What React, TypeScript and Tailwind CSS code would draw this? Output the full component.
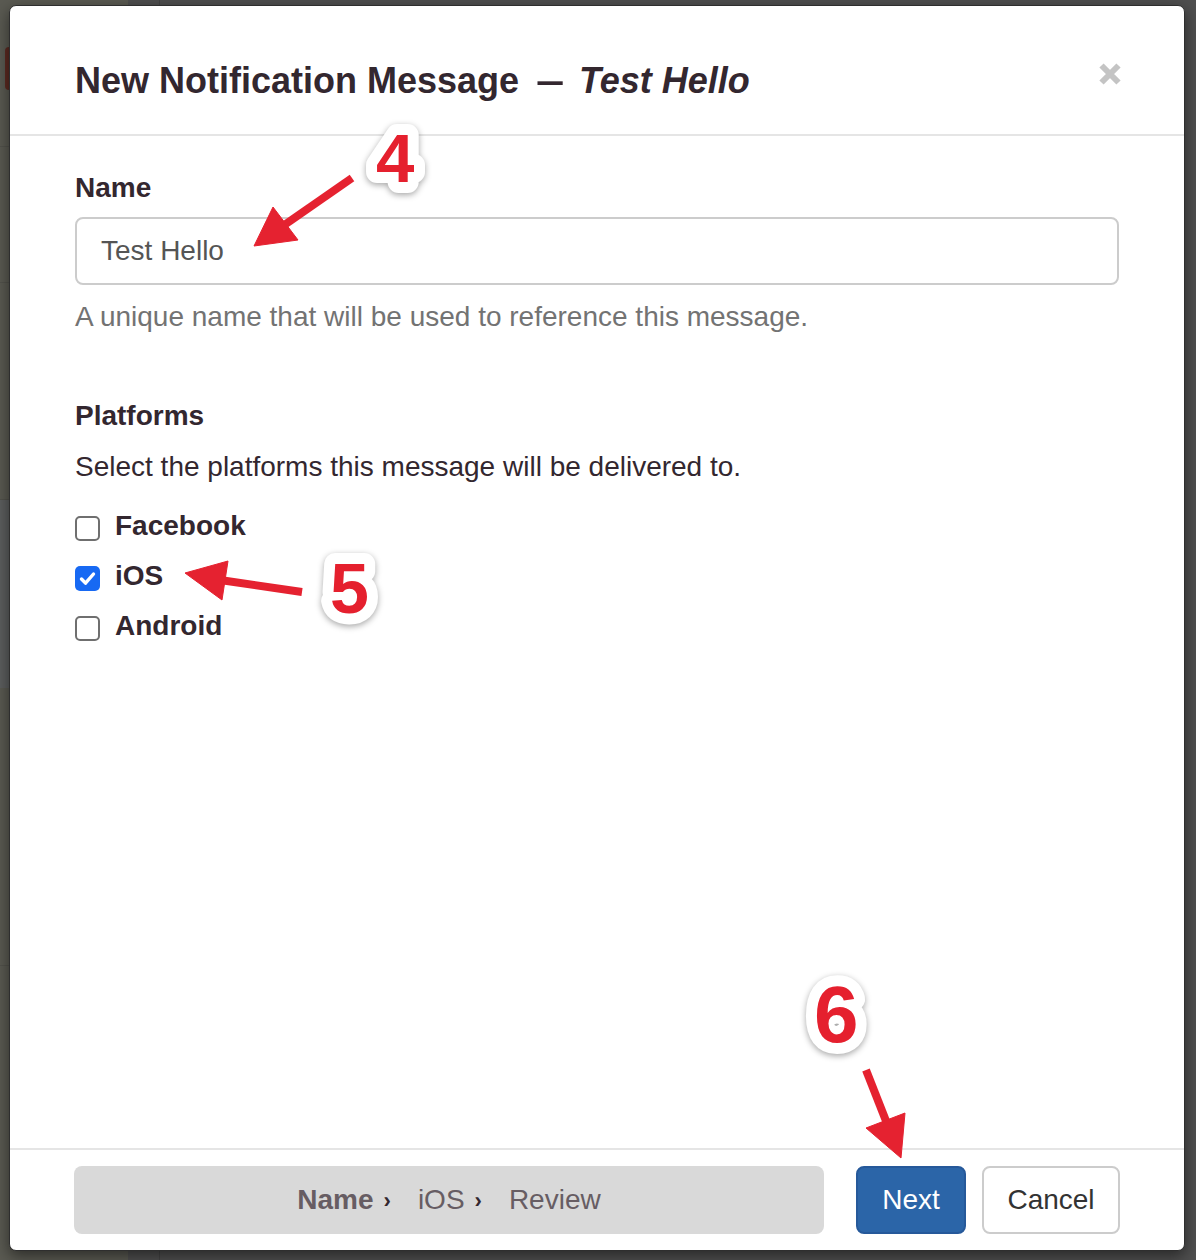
const font = "font-['Liberation_Sans','Helvetica_Neue',Arial,sans-serif]";

const platforms = [
  { name: "Facebook", checked: false },
  { name: "iOS", checked: true },
  { name: "Android", checked: false },
];

function Checkbox({ checked }: { checked: boolean }) {
  if (checked) {
    return (
      <span className="flex h-[25px] w-[25px] translate-y-[2px] items-center justify-center rounded-[5px] bg-[#1769f3]">
        <svg width="25" height="25" viewBox="0 0 25 25" fill="none">
          <path d="M6.5 13l4 4.2L18.5 8" stroke="white" strokeWidth="3.4" strokeLinecap="round" strokeLinejoin="round" />
        </svg>
      </span>
    );
  }
  return <span className="block h-[25px] w-[25px] translate-y-[2px] rounded-[5px] border-2 border-[#6f6f6f] bg-white" />;
}

function Callout({ n, x, y, size }: { n: string; x: number; y: number; size: number }) {
  return (
    <text
      x={x}
      y={y}
      fontSize={size}
      fontWeight="bold"
      fontFamily="'Liberation Sans', Arial, sans-serif"
      fill="#e5202e"
      stroke="white"
      strokeWidth="22"
      strokeLinejoin="round"
      paintOrder="stroke"
      className="[filter:drop-shadow(0_2px_3px_rgba(0,0,0,0.35))]"
    >
      {n}
    </text>
  );
}

export default function App() {
  return (
    <div className={`relative flex h-[1260px] w-[1196px] overflow-hidden bg-[#4f4f4f] ${font}`}>
      {/* dimmed page behind the dialog */}
      <div className="flex w-[128px] flex-col bg-[#5a5a52]">
        <div className="h-[147px] border-b border-[#52524b] pl-[5px] pt-[47px]">
          <div className="h-[43px] w-[12px] rounded-sm bg-[#5c2a22]" />
        </div>
        <div className="h-[136px] border-b border-[#52524b]" />
        <div className="h-[217px] border-b border-[#52524b]" />
        <div className="h-[188px] bg-[#5c5e5e]" />
        <div className="h-[278px] border-b border-[#52524b]" />
      </div>
      <div className="flex-1">
        <div className="ml-[31px] h-full border-l border-[#444]" />
      </div>

      {/* dialog */}
      <div className="absolute left-[9px] top-[5px] flex h-[1246px] w-[1176px] flex-col rounded-[7px] border border-[#2e2e2e] bg-white shadow-[0_5px_15px_rgba(0,0,0,0.5)]">
        <div className="flex items-start justify-between border-b-2 border-[#e5e5e5] px-[65px] pb-[33px] pt-[55px]">
          <h4 className="text-[36px] font-bold leading-[40px] text-[#33272f]">
            New Notification Message
            <span className="ml-[13px] mr-[11px] inline-block scale-x-[0.7]">—</span>
            <em>Test Hello</em>
          </h4>
          <button className="-mr-[2px] mt-[2px]" aria-label="Close">
            <svg width="22" height="22" viewBox="0 0 22 22">
              <path d="M2.5 2.5L19.5 19.5M19.5 2.5L2.5 19.5" stroke="#c4c4c4" strokeWidth="6" />
            </svg>
          </button>
        </div>

        <div className="flex-1 px-[65px] pt-[32px] text-[28px] leading-[40px] text-[#33272f]">
          <label className="block font-bold">Name</label>
          <div className="mt-[9px] flex h-[68px] items-center rounded-[8px] border-2 border-[#cccccc] px-[24px] text-[#555]">
            Test Hello
          </div>
          <p className="mt-[12px] text-[#737373]">A unique name that will be used to reference this message.</p>

          <label className="mt-[59px] block font-bold">Platforms</label>
          <p className="mt-[11px]">Select the platforms this message will be delivered to.</p>

          <div className="mt-[14px] flex flex-col">
            {platforms.map((p) => (
              <div key={p.name} className="flex h-[50px] items-center gap-[15px]">
                <Checkbox checked={p.checked} />
                <span className="font-bold">{p.name}</span>
              </div>
            ))}
          </div>
        </div>

        <div className="flex items-center border-t-2 border-[#e5e5e5] px-[64px] pb-[16px] pt-[16px] text-[28px]">
          <div className="flex h-[68px] flex-1 items-center justify-center rounded-[8px] bg-[#d9d9d9] text-[#675d63]">
            <span className="font-bold">Name</span>
            <span className="ml-[10px] mr-[27px] text-[22px] font-bold text-[#33272f]">›</span>
            <span>iOS</span>
            <span className="ml-[10px] mr-[27px] text-[22px] font-bold text-[#33272f]">›</span>
            <span>Review</span>
          </div>
          <button className="ml-[32px] h-[68px] w-[110px] rounded-[8px] border-2 border-[#26599a] bg-[#2b65a8] text-white">
            Next
          </button>
          <button className="ml-[16px] h-[68px] w-[138px] rounded-[8px] border-2 border-[#cccccc] bg-white text-[#333]">
            Cancel
          </button>
        </div>
      </div>

      {/* annotations */}
      <svg className="pointer-events-none absolute left-0 top-0" width="1196" height="1260">
        <g fill="#e52230" stroke="#e52230">
          <line x1="352" y1="178" x2="280" y2="228" strokeWidth="8" />
          <polygon points="254,246 273,207 298,240" strokeWidth="1" />
          <line x1="302" y1="592" x2="220" y2="580" strokeWidth="8" />
          <polygon points="185,573 228,561 222,600" strokeWidth="1" />
          <line x1="866" y1="1070" x2="888" y2="1126" strokeWidth="8" />
          <polygon points="901,1158 866,1128 905,1113" strokeWidth="1" />
        </g>
        <Callout n="4" x={376} y={182} size={69} />
        <Callout n="5" x={330} y={613} size={70} />
        <Callout n="6" x={814} y={1042} size={80} />
      </svg>
    </div>
  );
}
